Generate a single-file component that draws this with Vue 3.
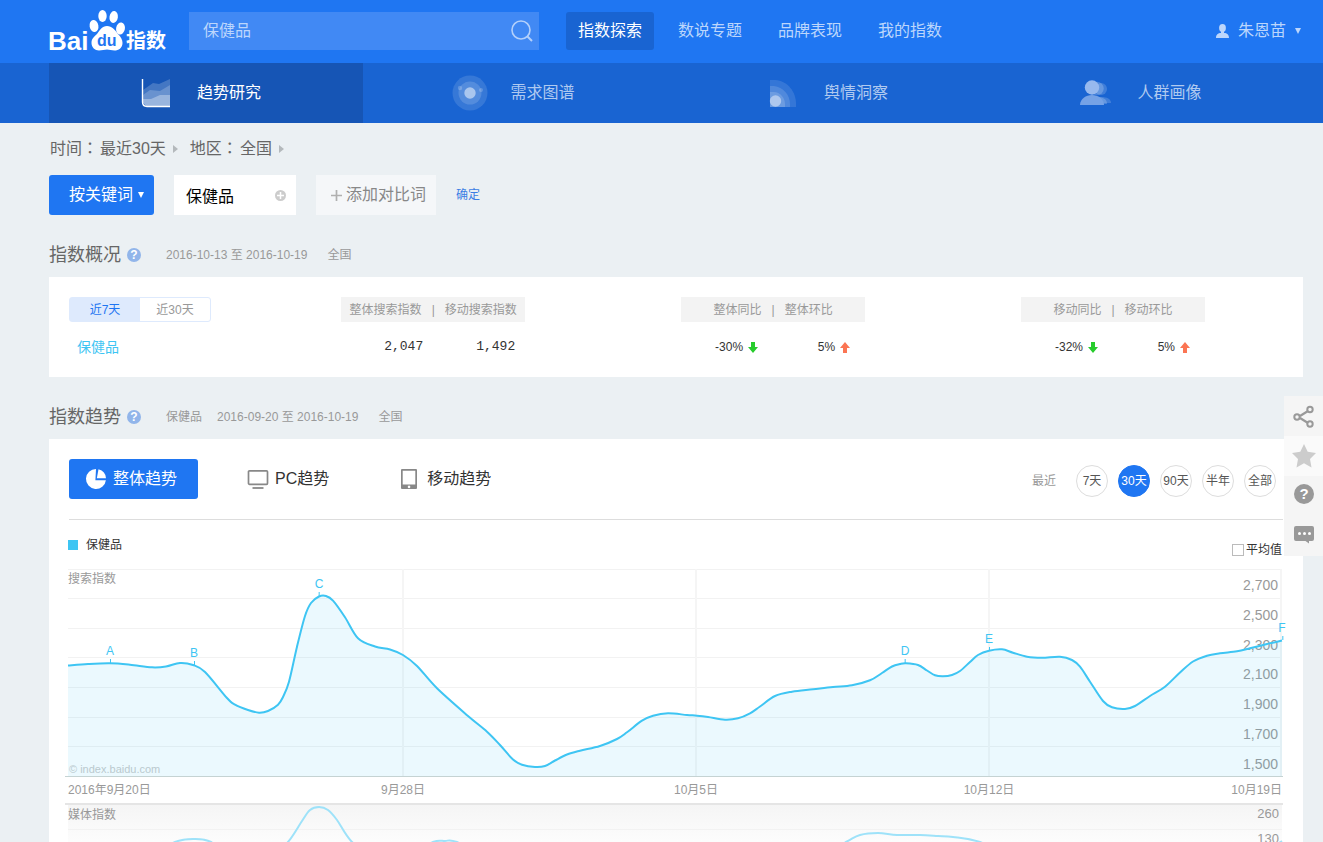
<script setup>
import { ref } from 'vue'

const query = ref('保健品')
const keyword = ref('保健品')
const showAverage = ref(false)

const mainNav = ['指数探索', '数说专题', '品牌表现', '我的指数']
const subNav = ['趋势研究', '需求图谱', '舆情洞察', '人群画像']
const ranges = ['7天', '30天', '90天', '半年', '全部']
const yTicks = ['2,700', '2,500', '2,300', '2,100', '1,900', '1,700', '1,500']
const gridRows = [1, 30, 60, 89, 119, 149, 178]
const gridCols = [335, 628, 921, 1213]

const searchPoints = [
  [0, 96.5], [20, 95], [42, 94.3], [62, 95.7], [84, 98.3], [98, 97.5], [112, 94], [125, 96], [137, 103],
  [159, 129], [167, 135.7], [180, 141], [191, 143.7], [200, 142], [210, 135.7], [215, 128], [221, 112.7],
  [229, 77.7], [237, 47], [243, 34], [251, 27.5], [258, 27], [265, 31.7], [277, 48.3], [290, 69.3],
  [307, 77.5], [322, 80.5], [335, 86], [349, 97], [369, 119.3], [400, 147], [419, 162.7], [432, 176],
  [445, 190.5], [454, 195.7], [467, 198], [477, 197], [487, 191.5], [499, 185.5], [512, 181.7], [532, 177],
  [549, 170], [559, 163.3], [574, 151.7], [585, 146.7], [600, 144.3], [619, 146], [629, 146.7], [640, 148],
  [657, 150.7], [670, 149.3], [682, 144.3], [692, 137.5], [707, 127], [724, 122.7], [745, 120.3], [765, 118],
  [784, 116.3], [802, 111.3], [814, 104], [824, 97.5], [832, 95], [838, 94.3], [850, 96], [859, 101.5],
  [867, 106.3], [875, 107.3], [884, 106], [892, 102], [902, 93], [910, 86], [921, 81.7], [934, 80.3],
  [945, 83.7], [959, 87.7], [974, 88.7], [992, 87.7], [1004, 91], [1012, 97.7], [1022, 112.7], [1035, 132],
  [1044, 138.3], [1057, 140], [1067, 137], [1082, 127], [1097, 117.7], [1112, 103.5], [1125, 92.5],
  [1139, 86.7], [1152, 84.3], [1169, 82.3], [1182, 79.3], [1199, 75], [1214, 71.5],
]
const mediaPoints = [
  [0, 60], [60, 58], [84, 50], [107, 37], [125, 34], [143, 37], [165, 55], [200, 56], [220, 37],
  [234, 16], [242, 5], [251, 2], [260, 5], [269, 15], [284, 37], [310, 55], [340, 50], [365, 37],
  [377, 36], [389, 37], [430, 55], [600, 60], [740, 58], [778, 37], [792, 30], [810, 28],
  [829, 30], [852, 30], [870, 31], [885, 32], [912, 37], [960, 55], [1150, 58], [1190, 50], [1214, 36],
]
const markers = [
  { name: 'A', x: 42, y: 94 },
  { name: 'B', x: 126, y: 96 },
  { name: 'C', x: 251, y: 27 },
  { name: 'D', x: 837, y: 94 },
  { name: 'E', x: 921, y: 82 },
  { name: 'F', x: 1214, y: 71 },
]
const dates = [
  { text: '2016年9月20日', x: 0, align: 'start' },
  { text: '9月28日', x: 335, align: 'middle' },
  { text: '10月5日', x: 628, align: 'middle' },
  { text: '10月12日', x: 921, align: 'middle' },
  { text: '10月19日', x: 1214, align: 'end' },
]
const pct = (x) => (x / 1214) * 100 + '%'

// Catmull-Rom spline expressed as cubic bezier segments
function smooth(pts) {
  let d = `M${pts[0][0]} ${pts[0][1]}`
  for (let i = 0; i < pts.length - 1; i++) {
    const p0 = pts[i - 1] || pts[i]
    const p1 = pts[i]
    const p2 = pts[i + 1]
    const p3 = pts[i + 2] || p2
    d += ` C${p1[0] + (p2[0] - p0[0]) / 6} ${p1[1] + (p2[1] - p0[1]) / 6} ${p2[0] - (p3[0] - p1[0]) / 6} ${p2[1] - (p3[1] - p1[1]) / 6} ${p2[0]} ${p2[1]}`
  }
  return d
}
const searchLine = smooth(searchPoints)
const searchArea = searchLine + ' L1214 208 L0 208 Z'
const mediaLine = smooth(mediaPoints)
</script>

<template>
  <div class="page">
    <header class="topbar">
      <a href="#" class="logo" aria-label="Baidu指数">
        <svg width="118" height="44" viewBox="0 0 118 44">
          <g fill="#fff">
            <text x="0" y="41" class="logo-latin">Bai</text>
            <ellipse cx="54.500" cy="7" rx="4.200" ry="6" />
            <ellipse cx="65.700" cy="8" rx="4.200" ry="6" transform="rotate(8 65.700 8)" />
            <ellipse cx="46" cy="17" rx="4.400" ry="6" transform="rotate(-10 46 17)" />
            <ellipse cx="72.500" cy="19.500" rx="4.400" ry="6" transform="rotate(10 72.500 19.500)" />
            <path d="M59 17c5 0 8 4 11 8 3 3 4.500 6 4.500 9 0 5-4 7.500-8 7.500-3 0-5-1-7.500-1s-5 1-8 1c-4 0-7.500-3-7.500-7.500s2.500-6 5.500-9c3-4 5-8 10-8z" />
            <text x="78" y="39" class="logo-cjk">指数</text>
          </g>
          <text x="49" y="37" class="logo-du">du</text>
        </svg>
      </a>
      <form class="search" role="search" @submit.prevent>
        <input v-model="query" type="text" aria-label="搜索关键词" />
        <button type="submit" aria-label="搜索">
          <svg width="22" height="22" viewBox="0 0 22 22" fill="none" stroke="#b3d0fb">
            <circle cx="10" cy="10" r="9" stroke-width="1.6" />
            <path d="M16 16l5 5" stroke-width="2" />
          </svg>
        </button>
      </form>
      <nav class="main-nav">
        <a v-for="(item, i) in mainNav" :key="item" href="#" :class="{ active: i === 0 }">{{ item }}</a>
      </nav>
      <button class="user" type="button">
        <svg width="13" height="14" viewBox="0 0 13 14" fill="#bcd6fc">
          <ellipse cx="6.500" cy="4" rx="3.400" ry="4" />
          <path d="M5 7h3v2c3 0 5 1.500 5 5H0c0-3.500 2-5 5-5z" />
        </svg>
        <span>朱恩苗</span>
        <svg width="6" height="6" viewBox="0 0 6 6" fill="#bcd6fc"><path d="M0 0h6L3 6z" /></svg>
      </button>
    </header>

    <nav class="sub-nav">
      <a v-for="(item, i) in subNav" :key="item" href="#" :class="{ active: i === 0 }">
        <svg v-if="i === 0" width="36" height="36" viewBox="0 0 36 36">
          <path d="M5 15l10-7 6 1 11-5v28H9l-4-4z" fill="#fff" opacity=".2" />
          <path d="M5 20l7-5 10 1 10-6v22H9l-4-4z" fill="#fff" opacity=".2" />
          <path d="M5 24h8l9-4h10v12H9l-4-4z" fill="#fff" opacity=".32" />
          <path d="M4.500 4v23q0 4.500 4.500 4.500h23" fill="none" stroke="#fff" stroke-width="1.400" />
        </svg>
        <svg v-else-if="i === 1" width="36" height="36" viewBox="0 0 36 36" fill="#fff">
          <circle cx="18" cy="18" r="17.500" opacity=".13" />
          <circle cx="18" cy="18" r="11.500" opacity=".15" />
          <circle cx="18" cy="18" r="5.700" opacity=".5" />
          <circle cx="8" cy="13" r="2.200" opacity=".2" />
          <circle cx="29" cy="15" r="2" opacity=".2" />
        </svg>
        <svg v-else-if="i === 2" width="36" height="36" viewBox="0 0 36 36" fill="#fff">
          <path d="M5 5h5c13 1 21 12 21 24v3H5z" opacity=".12" />
          <path d="M5 11h4c9 1 16 9 16 18v3H5z" opacity=".14" />
          <path d="M5 17h4c6 0 11 6 11 12v3H5z" opacity=".16" />
          <circle cx="10.500" cy="26" r="5.700" opacity=".45" />
        </svg>
        <svg v-else width="36" height="36" viewBox="0 0 36 36" fill="#fff">
          <g opacity=".17"><circle cx="22" cy="14" r="6" /><path d="M12 28c0-4 4-6 10-6s10 2 10 6z" /></g>
          <g opacity=".2"><circle cx="18" cy="13.500" r="6.700" /><path d="M8 29c0-5 4-7 10-7s10 2 10 7z" /></g>
          <path d="M1 30c0-6 6-10 12-10s12 4 12 10z" fill="#75a2e6" />
          <circle cx="13" cy="12.500" r="7.200" fill="#97b9ee" />
        </svg>
        <span>{{ item }}</span>
      </a>
    </nav>

    <main class="content">
      <div class="filters">
        <span>时间<i class="colon">：</i></span><a href="#">最近30天</a>
        <svg class="chev" width="5" height="8" viewBox="0 0 5 8"><path d="M0 0l5 4-5 4z" fill="#b4b9bc" /></svg>
        <span class="region">地区<i class="colon">：</i></span><a href="#">全国</a>
        <svg class="chev" width="5" height="8" viewBox="0 0 5 8"><path d="M0 0l5 4-5 4z" fill="#b4b9bc" /></svg>
      </div>

      <form class="compare" @submit.prevent>
        <button class="by-keyword" type="button">
          按关键词
          <svg width="6" height="6" viewBox="0 0 6 6" fill="#fff"><path d="M0 0h6L3 6z" /></svg>
        </button>
        <div class="keyword">
          <input v-model="keyword" type="text" aria-label="关键词" />
          <button type="button" aria-label="添加">
            <svg width="11" height="11" viewBox="0 0 11 11">
              <circle cx="5.500" cy="5.500" r="5.500" fill="#ccc" />
              <path d="M5.500 2v7M2 5.500h7" stroke="#fff" stroke-width="1.500" />
            </svg>
          </button>
        </div>
        <button class="add" type="button">
          <svg width="11" height="11" viewBox="0 0 11 11"><path d="M5.500 0v11M0 5.500h11" stroke="#b0b0b0" stroke-width="1.700" /></svg>
          添加对比词
        </button>
        <button class="confirm" type="submit">确定</button>
      </form>

      <div class="section-head">
        <h2>指数概况</h2>
        <button class="help" type="button" aria-label="帮助">?</button>
        <span class="span-dates">2016-10-13 至 2016-10-19</span>
        <span>全国</span>
      </div>

      <section class="card overview">
        <table>
          <thead>
            <tr>
              <th class="period">
                <div class="tabs">
                  <button type="button" class="on">近7天</button>
                  <button type="button">近30天</button>
                </div>
              </th>
              <th><div class="pair-head"><span>整体搜索指数</span><i>|</i><span>移动搜索指数</span></div></th>
              <th><div class="pair-head"><span>整体同比</span><i>|</i><span>整体环比</span></div></th>
              <th><div class="pair-head"><span>移动同比</span><i>|</i><span>移动环比</span></div></th>
            </tr>
          </thead>
          <tbody>
            <tr>
              <td class="term">保健品</td>
              <td><div class="pair numbers"><span>2,047</span><span>1,492</span></div></td>
              <td v-for="drop in ['-30%', '-32%']" :key="drop">
                <div class="pair change">
                  <span>{{ drop }}<svg width="10" height="11" viewBox="0 0 10 11"><path d="M3 0h4v5h3L5 11 0 5h3z" fill="#27cc2c" /></svg></span>
                  <span>5%<svg width="10" height="11" viewBox="0 0 10 11"><path d="M3 11h4V6h3L5 0 0 6h3z" fill="#fb7553" /></svg></span>
                </div>
              </td>
            </tr>
          </tbody>
        </table>
      </section>

      <div class="section-head">
        <h2>指数趋势</h2>
        <button class="help" type="button" aria-label="帮助">?</button>
        <span>保健品</span>
        <span class="span-dates">2016-09-20 至 2016-10-19</span>
        <span>全国</span>
      </div>

      <section class="card trend">
        <div class="toolbar">
          <div class="devices">
            <button type="button" class="on">
              <svg width="22" height="22" viewBox="0 0 22 22" fill="#fff">
                <path d="M11 1a10 10 0 1 0 9.900 11.200H10.400z" />
                <path d="M13.500 1.200A10 10 0 0 1 21 10.200h-9.200z" />
              </svg>
              整体趋势
            </button>
            <button type="button">
              <svg width="22" height="22" viewBox="0 0 22 22">
                <rect x="1.500" y="2.800" width="19" height="13.500" rx="1" fill="none" stroke="#888" stroke-width="1.700" />
                <path d="M5.500 20h11" stroke="#888" stroke-width="1.800" />
              </svg>
              PC趋势
            </button>
            <button type="button" class="mobile">
              <svg width="22" height="22" viewBox="0 0 22 22">
                <path d="M3 1h14q1 0 1 1v18q0 1-1 1H3q-1 0-1-1V2q0-1 1-1zm.700 1.700v13.800h12.600V2.700zM10 17.600a1.300 1.300 0 1 0 .1 0z" fill="#888" fill-rule="evenodd" />
              </svg>
              移动趋势
            </button>
          </div>
          <div class="ranges">
            <span>最近</span>
            <button v-for="r in ranges" :key="r" type="button" :class="{ on: r === '30天' }">{{ r }}</button>
          </div>
        </div>

        <div class="chart">
          <div class="legend">
            <span class="series">保健品</span>
            <label class="average"><input v-model="showAverage" type="checkbox" />平均值</label>
          </div>
          <div class="plot">
            <div class="y-labels"><span v-for="t in yTicks" :key="t">{{ t }}</span></div>
            <svg viewBox="0 0 1214 208" preserveAspectRatio="none">
              <path v-for="y in gridRows" :key="'r' + y" :d="`M0 ${y - 0.5}H1214`" class="grid" />
              <path v-for="x in gridCols" :key="'c' + x" :d="`M${x} 0V208`" class="grid wide" />
              <path :d="searchArea" fill="#3ec5f3" fill-opacity=".1" />
              <path d="M-3 207.500H1215" class="axis" />
              <path :d="searchLine" class="line" />
            </svg>
            <span class="plot-title">搜索指数</span>
            <span class="watermark">© index.baidu.com</span>
            <span v-for="m in markers" :key="m.name" class="marker" :style="{ left: pct(m.x), top: m.y + 'px' }">{{ m.name }}</span>
          </div>
          <div class="dates">
            <span v-for="d in dates" :key="d.text" :class="d.align" :style="{ left: pct(d.x) }">{{ d.text }}</span>
          </div>
          <div class="plot media">
            <svg viewBox="0 0 1214 60" preserveAspectRatio="none">
              <path d="M-3 -1H1215" class="divider" />
              <path d="M0 24.500H1214" class="grid" />
              <path :d="mediaLine" class="line" />
            </svg>
            <span class="plot-title">媒体指数</span>
            <div class="media-labels"><span>260</span><span>130</span></div>
          </div>
        </div>
      </section>
    </main>

    <aside class="side">
      <button type="button" aria-label="分享">
        <svg width="22" height="24" viewBox="0 0 22 24" fill="none" stroke="#999" stroke-width="2">
          <path d="M7 12l8-5M7 14l8 5" stroke-width="2.200" />
          <circle cx="4" cy="13" r="2.700" /><circle cx="17" cy="5.500" r="2.700" /><circle cx="17" cy="20" r="2.700" />
        </svg>
      </button>
      <button type="button" aria-label="收藏" class="fav">
        <svg width="24" height="24" viewBox="0 0 24 24" fill="#ccc"><path d="M12 0l3.700 7.800 8.300 1.200-6 6 1.500 8.500L12 19.300 4.500 23.500 6 15 0 9l8.300-1.200z" /></svg>
      </button>
      <button type="button" aria-label="帮助">
        <svg width="20" height="24" viewBox="0 0 20 24"><circle cx="10" cy="10" r="10" fill="#999" /><text x="10" y="15" text-anchor="middle" class="q">?</text></svg>
      </button>
      <button type="button" aria-label="反馈">
        <svg width="20" height="24" viewBox="0 0 20 24">
          <path d="M2 2h16q2 0 2 2v11q0 2-2 2h-3v2.500L11.500 17H2q-2 0-2-2V4q0-2 2-2z" fill="#999" />
          <circle cx="5.500" cy="9.500" r="1.500" fill="#fff" /><circle cx="10.500" cy="9.500" r="1.500" fill="#fff" /><circle cx="15.500" cy="9.500" r="1.500" fill="#fff" />
        </svg>
      </button>
    </aside>
  </div>
</template>

<style>
body {
  margin: 0;
  background: #ebf0f3;
}
</style>

<style scoped>
.page {
  height: 100vh;
  overflow: hidden;
  background: #ebf0f3;
  color: #333;
  font: 12px/16px "Liberation Sans", "Noto Sans CJK SC", sans-serif;
}
.page * { box-sizing: border-box; }
a { color: inherit; text-decoration: none; }
i { font-style: normal; }
svg { display: block; flex: none; }
button, input {
  margin: 0;
  padding: 0;
  border: 0;
  background: none;
  color: inherit;
  font: inherit;
  outline: 0;
}
button { cursor: pointer; white-space: nowrap; }

.topbar {
  display: flex;
  align-items: center;
  height: 63px;
  padding: 0 22px 1px 48px;
  background: #1f76f2;
  color: #bcd6fc;
  font-size: 16px;
  line-height: 24px;
}
.logo { flex: none; }
.logo svg { overflow: visible; }
.logo-latin { font: bold 26px "Liberation Sans", sans-serif; }
.logo-cjk { font: bold 20px "Noto Sans CJK SC", sans-serif; }
.logo-du { font: bold 16px "Liberation Sans", sans-serif; fill: #1f76f2; }
.search {
  display: flex;
  align-items: center;
  width: 350px;
  height: 38px;
  margin-left: 23px;
  padding: 0 6px 0 14px;
  background: #4189f4;
}
.search input { flex: 1; min-width: 0; }
.main-nav { display: flex; gap: 12px; margin-left: 27px; }
.main-nav a {
  padding: 0 12px;
  border-radius: 3px;
  line-height: 38px;
  white-space: nowrap;
}
.main-nav a.active { background: #1964d2; color: #fff; }
.user { display: flex; align-items: center; gap: 9px; margin-left: auto; }

.sub-nav {
  display: flex;
  height: 60px;
  padding: 0 20px 0 49px;
  background: #1964d2;
  color: #b0caf0;
  font-size: 16px;
}
.sub-nav a {
  display: flex;
  flex: 1;
  align-items: center;
  gap: 23px;
  padding-left: 89px;
}
.sub-nav a.active { background: #1655b5; color: #fff; }

.content { padding: 14px 20px 0 49px; }
.filters {
  display: flex;
  align-items: center;
  height: 24px;
  padding-left: 1px;
  color: #666;
  font-size: 16px;
  line-height: 24px;
}
.colon { margin-right: 2px; font-family: "Noto Sans CJK TC", sans-serif; line-height: 16px; }
.chev { margin-left: 7px; }
.region { margin-left: 12px; }
.compare {
  display: flex;
  align-items: center;
  gap: 20px;
  height: 40px;
  margin-top: 14px;
  font-size: 16px;
}
.by-keyword {
  display: flex;
  align-items: center;
  gap: 5px;
  height: 40px;
  padding: 0 10px 0 20px;
  border-radius: 3px;
  background: #1f76f2;
  color: #fff;
}
.keyword {
  display: flex;
  align-items: center;
  width: 122px;
  height: 40px;
  padding: 0 10px 0 12px;
  background: #fff;
  color: #000;
}
.keyword input { flex: 1; min-width: 0; }
.add {
  display: flex;
  align-items: center;
  gap: 4px;
  height: 40px;
  padding: 0 10px 0 15px;
  background: #f5f7f9;
  color: #888;
}
.confirm { color: #3b7ee4; font-size: 12px; }

.section-head {
  display: flex;
  align-items: center;
  height: 24px;
  margin: 28px 0 10px;
  color: #999;
}
.section-head h2 { margin: 0; color: #666; font-size: 18px; font-weight: 400; line-height: 24px; }
.section-head span { margin-right: 15px; }
.section-head .span-dates { margin-right: 20px; }
.help {
  width: 14px;
  height: 14px;
  margin: 0 25px 0 6px;
  border-radius: 50%;
  background: #91b5ea;
  color: #fff;
  font-weight: bold;
  line-height: 14px;
}
.card { background: #fff; }

.overview { padding: 20px; }
.overview table { width: 100%; border-collapse: collapse; table-layout: fixed; }
.overview th, .overview td { padding: 0; font-weight: 400; }
.overview th { width: 28%; height: 25px; color: #999; }
.overview th.period { width: 16%; }
.overview td { height: 35px; padding-top: 15px; }
.overview td.term { padding-left: 8px; color: #3ec5f3; font-size: 14px; line-height: 20px; }
.tabs {
  display: flex;
  width: 142px;
  height: 25px;
  border: 1px solid #deeafd;
  border-radius: 3px;
}
.tabs button { flex: 1; }
.tabs .on { background: #deeafd; color: #1f76f2; }
.pair-head {
  display: flex;
  align-items: center;
  justify-content: center;
  gap: 10px;
  width: 184px;
  height: 25px;
  margin: 0 auto;
  background: #f3f3f3;
}
.pair { display: flex; width: 184px; margin: 0 auto; }
.pair span { display: flex; flex: 1; align-items: center; justify-content: flex-end; gap: 5px; padding-right: 15px; }
.pair.numbers span { padding-right: 10px; font-family: "Liberation Mono", monospace; font-size: 13px; }

.toolbar {
  display: flex;
  align-items: center;
  justify-content: space-between;
  margin: 0 20px;
  padding: 20px 0;
  border-bottom: 1px solid #ddd;
}
.devices { display: flex; gap: 29px; font-size: 16px; }
.devices button {
  display: flex;
  align-items: center;
  gap: 6px;
  height: 40px;
  padding: 0 21px 0 16px;
  border-radius: 3px;
}
.devices .on { background: #1f76f2; color: #fff; }
.devices button + button { padding-left: 20px; }
.ranges { display: flex; align-items: center; gap: 10px; padding: 4px 7px 0 0; color: #999; }
.ranges span { margin-right: 10px; }
.ranges button {
  width: 32px;
  height: 32px;
  border: 1px solid #ddd;
  border-radius: 50%;
  color: #555;
}
.ranges .on { border-color: #1f76f2; background: #1f76f2; color: #fff; }

.chart { padding: 0 21px 0 19px; }
.legend { display: flex; align-items: center; justify-content: space-between; height: 49px; }
.series { display: flex; align-items: center; gap: 8px; }
.series::before { content: ""; width: 10px; height: 10px; background: #3ec5f3; }
.average { display: flex; align-items: center; gap: 2px; padding-top: 10px; }
.average input { width: 12px; height: 12px; border: 1px solid #bbb; background: #fff; appearance: none; }
.plot { position: relative; height: 208px; color: #999; }
.plot > svg { position: relative; width: 100%; height: 100%; overflow: visible; }
.grid { fill: none; stroke: #f2f2f2; vector-effect: non-scaling-stroke; }
.wide { stroke-width: 2px; stroke: #f5f5f5; }
.axis { stroke: #c5d3d3; vector-effect: non-scaling-stroke; }
.divider { stroke: #e5e5e5; stroke-width: 2px; vector-effect: non-scaling-stroke; }
.line { fill: none; stroke: #3ec5f3; stroke-width: 2px; vector-effect: non-scaling-stroke; }
.plot-title { position: absolute; left: 0; top: 2px; }
.watermark { position: absolute; left: 1px; bottom: 0; color: #bac9ce; font-size: 11px; }
.y-labels {
  position: absolute;
  inset: 1px 4px -2px 0;
  display: flex;
  flex-direction: column;
  justify-content: space-around;
  font-size: 14px;
  text-align: right;
}
.marker {
  position: absolute;
  padding-bottom: 4px;
  color: #3ec5f3;
  line-height: 16px;
  transform: translate(-50%, -100%);
}
.marker::after {
  content: "";
  position: absolute;
  left: 50%;
  bottom: 0;
  width: 1px;
  height: 4px;
  background: #3ec5f3;
}
.dates { position: relative; height: 28px; color: #999; line-height: 26px; }
.dates span { position: absolute; white-space: nowrap; }
.dates .middle { transform: translateX(-50%); }
.dates .end { transform: translateX(-100%); }
.media {
  height: 60px;
  background: linear-gradient(#f5f5f5, #fdfdfd 40px);
}
.media .line { stroke: #9ee2f9; }
.media-labels {
  position: absolute;
  top: 1px;
  right: 3px;
  display: flex;
  flex-direction: column;
  gap: 9px;
  font-size: 13px;
  text-align: right;
}

.side { position: fixed; top: 396px; right: 0; width: 39px; background: #f5f5f5; }
.side button { display: flex; align-items: center; justify-content: center; width: 100%; height: 40px; }
.side .fav { background: #fafafa; }
.q { font: bold 15px "Liberation Sans", sans-serif; fill: #fff; }
</style>
